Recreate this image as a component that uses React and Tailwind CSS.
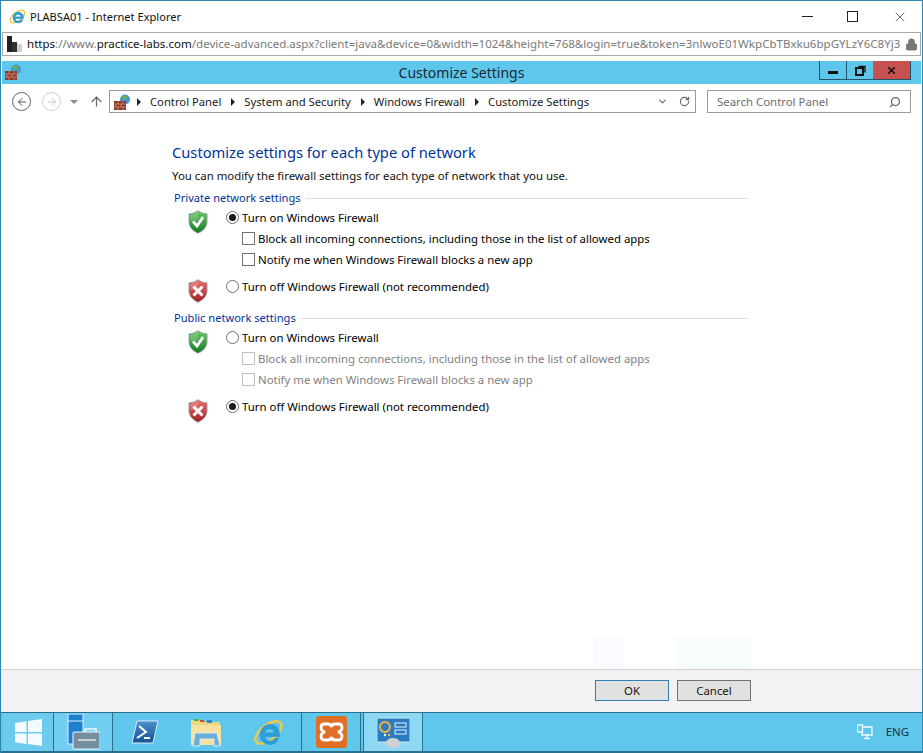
import React from "react";
import { Search, RotateCw, ChevronDown, ArrowLeft, ArrowRight, ArrowUp, Lock, X } from "lucide-react";

const IeLogo = ({ size = 20 }) => (
  <svg width={size} height={size} viewBox="0 0 32 32">
    <ellipse cx="16" cy="16" rx="16" ry="8" transform="rotate(-38 16 16)" fill="none" stroke="#eec94e" strokeWidth="2.600" />
    <path d="M27 20H12c.4 3 2.600 4.700 5.400 4.700 2.200 0 3.800-.9 4.900-2.600h4.300c-1.500 4-5 6.200-9.200 6.200-5.800 0-10-4.200-10-10.100 0-6 4.200-10.500 10.200-10.500 5.800 0 9.700 4.300 9.700 10V20zM12 16.500h10.200c-.2-2.700-2.200-4.300-5-4.300-2.700 0-4.700 1.600-5.200 4.300z" fill="#2a9fdc" stroke="#1c7fbc" strokeWidth="0.400" />
  </svg>
);

const FirewallIcon = () => (
  <svg width="17" height="16" viewBox="0 0 17 16" className="shrink-0">
    <circle cx="11" cy="5.500" r="5" fill="#3f9bd0" />
    <path d="M8 2.500c2-1.500 4-1 5 .5-1 1-1 2.500-2.500 2.500S8 4 8 2.500z" fill="#6fb04a" />
    <rect x="0" y="7" width="12" height="9" fill="#8f3a28" />
    <path d="M0 10h12M0 13h12M4 7v3M9 7v3M2 10v3M7 10v3M4 13v3M9 13v3" stroke="#d59a80" strokeWidth="0.700" />
  </svg>
);

const Shield = ({ ok }) => {
  const id = ok ? "shield-ok" : "shield-bad";
  return (
    <svg width="20" height="24" viewBox="0 0 20 24">
      <defs>
        <linearGradient id={id} x1="0" y1="0" x2="0" y2="1">
          <stop offset="0" stopColor={ok ? "#66c860" : "#e8706c"} />
          <stop offset="1" stopColor={ok ? "#177a2a" : "#a81e24"} />
        </linearGradient>
      </defs>
      <path d="M10 .7c2.500 2 5.500 3 9 3.100v8.200c0 5-3.700 8.800-9 11.300C4.700 20.800 1 17 1 12V3.800c3.500-.1 6.500-1.100 9-3.100z" fill={`url(#${id})`} stroke="#98a5a2" strokeWidth="1" />
      <path d="M10 2c-2 1.500-4.500 2.500-7.500 2.800V11c2.500 1 5 .5 7.500-1z" fill="#fff" opacity="0.180" />
      {ok ? (
        <path d="M5 11.500l4 4.500 6-9" fill="none" stroke="#fff" strokeWidth="2.800" />
      ) : (
        <path d="M5.500 7.500l9 9M14.500 7.500l-9 9" fill="none" stroke="#fff" strokeWidth="3" />
      )}
    </svg>
  );
};

const Radio = ({ checked, label }) => (
  <div className="flex items-center h-[21px]">
    <div className="w-[13px] h-[13px] rounded-full border border-[#707070] bg-white flex items-center justify-center">
      {checked && <div className="w-[7px] h-[7px] rounded-full bg-[#1a1a1a]" />}
    </div>
    <span className="ml-[3px] text-black">{label}</span>
  </div>
);

const Check = ({ disabled, label }) => (
  <div className="flex items-center h-[21px] ml-[16px]">
    <div className={`w-[13px] h-[13px] border bg-white ${disabled ? "border-[#c0c0c0]" : "border-[#707070]"}`} />
    <span className={`ml-[3px] ${disabled ? "text-[#7f7f7f]" : "text-black"}`}>{label}</span>
  </div>
);

const NetworkSection = ({ title, on }) => (
  <section className="h-[120px]">
    <div className="flex items-center h-[20px] pl-[2px]">
      <span className="text-[#003399] text-[11.100px]">{title}</span>
      <div className="flex-1 h-px bg-[#d5dfe5] ml-[5px]" />
    </div>
    <div className="flex pl-[16px] mt-[-1px]">
      <div className="w-[38px] pt-[3px]"><Shield ok /></div>
      <div>
        <Radio checked={on} label="Turn on Windows Firewall" />
        <Check disabled={!on} label="Block all incoming connections, including those in the list of allowed apps" />
        <Check disabled={!on} label="Notify me when Windows Firewall blocks a new app" />
      </div>
    </div>
    <div className="flex pl-[16px] mt-[6px]">
      <div className="w-[38px] pt-[3px]"><Shield /></div>
      <Radio checked={!on} label="Turn off Windows Firewall (not recommended)" />
    </div>
  </section>
);

const TaskCell = ({ children, className = "" }) => (
  <div className={`h-full flex items-center justify-center border-r border-[#2a6f8c] ${className}`}>{children}</div>
);

const Crumb = ({ first, children }) => (
  <>
    <span className={`w-0 h-0 border-y-[4px] border-y-transparent border-l-[4px] border-l-[#222] mr-[9px] ${first ? "ml-[6px]" : "ml-[10px]"}`} />
    <span className="text-[#1a1a1a] text-[11.250px] whitespace-nowrap">{children}</span>
  </>
);

export default function App() {
  return (
    <div className="relative w-[923px] h-[753px] overflow-hidden flex flex-col bg-white text-[11.400px] leading-none border-x border-t border-[#2d86ad]" style={{ fontFamily: '"Noto Sans", sans-serif' }}>
      {/* IE window chrome */}
      <div className="h-[31px] shrink-0 flex items-center pl-[8px]">
        <IeLogo size={17} />
        <span className="ml-[4px] text-[#111] text-[11.100px]">PLABSA01 - Internet Explorer</span>
        <div className="ml-auto flex items-center">
          <div className="w-[11px] h-px bg-[#222] mr-[34px]" />
          <div className="w-[11px] h-[11px] border border-[#222] mr-[34px]" />
          <X size={16} strokeWidth={1} className="mr-[14px] text-[#222]" />
        </div>
      </div>
      <div className="h-[24px] shrink-0 mx-[1px] border border-[#a9a9a9] flex items-center pl-[4px] pr-[2px]">
        <div className="w-[15px] h-[16px] flex items-end shrink-0">
          <div className="w-[5px] h-[16px] bg-[#222]" />
          <div className="w-[5px] h-[10px] bg-[#333]" />
          <div className="w-[5px] h-[8px] bg-[#cfcfcf]" />
        </div>
        <span className="ml-[5px] text-[11.550px] whitespace-nowrap text-[#7a7a7a]">
          <span className="text-[#111]">https</span>://www.<span className="text-[#111]">practice-labs.com</span>/device-advanced.aspx?client=java&amp;device=0&amp;width=1024&amp;height=768&amp;login=true&amp;token=3nlwoE01WkpCbTBxku6bpGYLzY6C8Yj3
        </span>
        <Lock size={13} className="ml-auto text-[#777] fill-[#777] shrink-0" />
      </div>

      {/* remote window title */}
      <div className="relative h-[23px] shrink-0 mt-[5px] mx-[1px] bg-[#5fc6ec] flex items-center justify-center">
        <div className="absolute left-[3px] top-[3px]"><FirewallIcon /></div>
        <span className="text-[14px] text-[#1a2a33]">Customize Settings</span>
        <div className="absolute right-[10px] top-0 h-[19px] flex border-x border-b border-[#1f566e]">
          <div className="w-[27px] flex items-center justify-center border-r border-[#1f566e]">
            <div className="w-[10px] h-[3px] bg-[#111] mt-[4px]" />
          </div>
          <div className="w-[26px] flex items-center justify-center">
            <svg width="11" height="11" viewBox="0 0 11 11" fill="none" stroke="#111">
              <rect x="1" y="3" width="7" height="7" strokeWidth="2" />
              <path d="M3.500 1.500h6.500v6" strokeWidth="1.300" />
            </svg>
          </div>
          <div className="w-[37px] bg-[#c75050] flex items-center justify-center">
            <X size={11} strokeWidth={3.500} className="text-[#111]" />
          </div>
        </div>
      </div>

      {/* explorer toolbar */}
      <div className="h-[35px] shrink-0 flex items-center pl-[11px]">
        <div className="w-[19px] h-[19px] rounded-full border border-[#666] flex items-center justify-center">
          <ArrowLeft size={12} className="text-[#555]" />
        </div>
        <div className="w-[19px] h-[19px] ml-[11px] rounded-full border border-[#d0d0d0] flex items-center justify-center">
          <ArrowRight size={12} className="text-[#c8c8c8]" />
        </div>
        <span className="ml-[9px] w-0 h-0 border-x-[4px] border-x-transparent border-t-[4px] border-t-[#8a8a8a]" />
        <ArrowUp size={15} className="ml-[11px] text-[#666]" />
        <div className="ml-[5px] w-[587px] h-[23px] border border-[#9a9a9a] flex items-center pl-[4px] pr-[5px]">
          <FirewallIcon />
          <Crumb first>Control Panel</Crumb>
          <Crumb>System and Security</Crumb>
          <Crumb>Windows Firewall</Crumb>
          <Crumb>Customize Settings</Crumb>
          <ChevronDown size={11} strokeWidth={2.500} className="ml-auto text-[#666]" />
          <RotateCw size={11} strokeWidth={2.500} className="ml-[11px] text-[#666]" />
        </div>
        <div className="ml-[11px] w-[204px] h-[23px] border border-[#9a9a9a] flex items-center pl-[9px] pr-[9px]">
          <span className="text-[#6d6d6d]">Search Control Panel</span>
          <Search size={12} strokeWidth={2.500} className="ml-auto text-[#666] -scale-x-100" />
        </div>
      </div>

      {/* firewall settings */}
      <main className="flex-1 pl-[171px] pt-[23px]">
        <div className="w-[576px]">
          <h1 className="text-[14.700px] h-[20px] leading-[20px] text-[#003399]">Customize settings for each type of network</h1>
          <p className="h-[26px] leading-[27px] text-[#111]">You can modify the firewall settings for each type of network that you use.</p>
          <NetworkSection title="Private network settings" on />
          <NetworkSection title="Public network settings" on={false} />
        </div>
      </main>

      {/* dialog buttons */}
      <footer className="h-[43px] shrink-0 bg-[#f4f1f4] border-t border-[#d2d2d2] flex items-start justify-end pt-[10px] pr-[171px] gap-[8px]">
        <button className="w-[74px] h-[21px] bg-[#e1e1e1] border border-[#2f7fb0] text-[#111]">OK</button>
        <button className="w-[74px] h-[21px] bg-[#e1e1e1] border border-[#707070] text-[#111]">Cancel</button>
      </footer>

      {/* taskbar */}
      <div className="h-[41px] shrink-0 bg-[#5fc6ec] flex items-stretch pl-[2px] border-t border-b-2 border-[#2a6f8c]">
        <TaskCell className="w-[51px] bg-[#6ccbef]">
          <svg width="27" height="27" viewBox="0 0 27 27">
            <path d="M0 4l11.500-1.700V13H0zM13 2l14-2v13H13zM0 14.500h11.500v10.500L0 23.300zM13 14.500h14V27l-14-2z" fill="#f4fbfe" />
          </svg>
        </TaskCell>
        <TaskCell className="w-[59px] bg-[#72cff1]">
          <svg width="33" height="36" viewBox="0 0 33 36">
            <rect x="1" y="0" width="15" height="30" fill="#1f7fd1" stroke="#dff2fb" />
            <path d="M1 7h15" stroke="#dff2fb" />
            <path d="M18 18v-3h11v3" fill="none" stroke="#f2f7f9" strokeWidth="1.500" />
            <rect x="6" y="18" width="27" height="17" rx="1" fill="#74909e" stroke="#f2f7f9" />
            <path d="M11 26h18" stroke="#fff" strokeWidth="1.200" />
          </svg>
        </TaskCell>
        <TaskCell className="w-[189px]">
          <div className="flex items-center">
            <svg width="28" height="24" viewBox="0 0 28 24" className="mr-[31px]">
              <defs>
                <linearGradient id="ps-fill" x1="0" y1="0" x2="0" y2="1">
                  <stop offset="0" stopColor="#4a90cf" />
                  <stop offset="1" stopColor="#174f8f" />
                </linearGradient>
              </defs>
              <path d="M6 1h21l-5 22H1z" fill="url(#ps-fill)" stroke="#dcecf6" />
              <path d="M8 6l7 6-9 6M13 18h6" fill="none" stroke="#fff" strokeWidth="2" />
            </svg>
            <svg width="32" height="29" viewBox="0 0 32 29" className="mr-[31px]">
              <path d="M1 2h12l2 2h15v20H1z" fill="#f1d67d" />
              <rect x="4" y="1" width="5" height="2" fill="#5aa850" />
              <rect x="10" y="2" width="4" height="2" fill="#d1483c" />
              <rect x="17" y="2" width="5" height="3" fill="#3b88c9" />
              <path d="M1 7h30v20H1z" fill="#f7e2a0" />
              <path d="M5 15h22l3 13h-6v-7H10v7H3z" fill="#6caed6" stroke="#d7ecf6" />
            </svg>
            <IeLogo size={31} />
          </div>
        </TaskCell>
        <TaskCell className="w-[59px]">
          <svg width="31" height="32" viewBox="0 0 31 32">
            <rect width="31" height="32" rx="3" fill="#df6f24" />
            <path d="M8 8h4q3 0 3.500 3 .5-3 3.500-3h4q3 0 3 4 0 3-4 4 4 1 4 4 0 4-3 4h-4q-3 0-3.500-3-.5 3-3.500 3H8q-3 0-3-4 0-3 4-4-4-1-4-4 0-4 3-4z" fill="none" stroke="#fff" strokeWidth="2.800" />
          </svg>
        </TaskCell>
        <div className="w-[2px]" />
        <TaskCell className="w-[60px] bg-[#8fd8f3] border-l">
          <svg width="33" height="31" viewBox="0 0 33 31">
            <rect x="0" y="1" width="33" height="24" rx="1" fill="#2a7bc0" stroke="#cfe7f4" />
            <path d="M8 5a5 5 0 1 1-.1 0" fill="none" stroke="#f0b040" strokeWidth="2" />
            <rect x="18" y="6" width="11" height="4" fill="none" stroke="#e8f5fb" />
            <rect x="18" y="13" width="11" height="4" fill="none" stroke="#e8f5fb" />
            <circle cx="8" cy="18" r="1.200" fill="#e8f5fb" />
            <circle cx="12" cy="18" r="1.200" fill="#f0b040" />
            <ellipse cx="16" cy="26" rx="7" ry="5" fill="#cfd2d2" />
          </svg>
        </TaskCell>
        <div className="ml-auto flex items-center pr-[13px] text-[#14313f]">
          <svg width="16" height="16" viewBox="0 0 16 16" className="mr-[13px]" fill="none" stroke="#f4fbfe" strokeWidth="1.300">
            <rect x="0.500" y="1" width="5" height="7" />
            <path d="M5.500 3H15v8H5v-3M10 11v3M7 14.500h6" />
          </svg>
          <span>ENG</span>
        </div>
      </div>

      {/* faint leftovers from the remote session's rendering */}
      <div className="absolute left-[593px] top-[636px] w-[30px] h-[32px] bg-[#fafaff]" />
      <div className="absolute left-[676px] top-[636px] w-[74px] h-[32px] bg-[#f7fdf8]" />
    </div>
  );
}
